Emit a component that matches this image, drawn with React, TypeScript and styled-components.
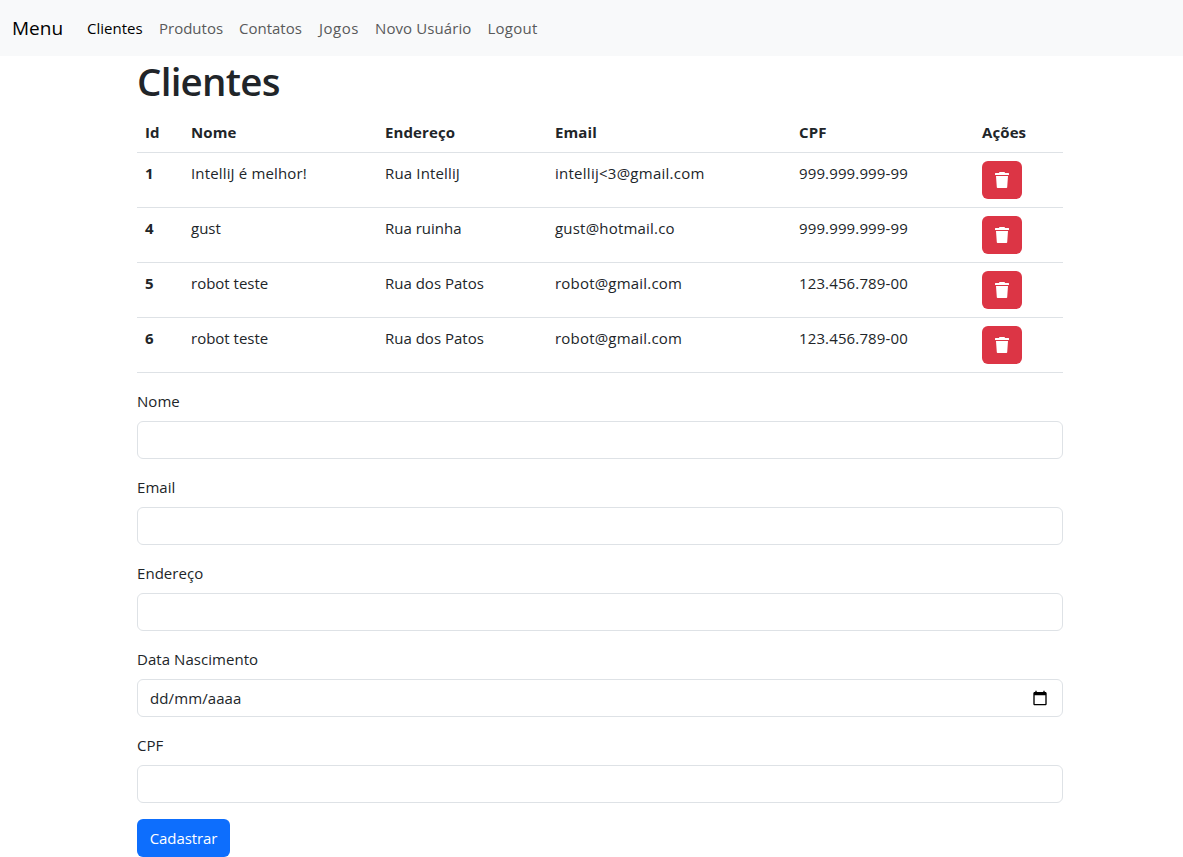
import React from "react";
import styled, { createGlobalStyle } from "styled-components";

const GlobalStyle = createGlobalStyle`
  *, *::before, *::after { box-sizing: border-box; }
  body {
    margin: 0;
    background: #fff;
    color: #212529;
    font-family: "Open Sans", "Noto Sans", sans-serif;
    font-size: 15px;
    line-height: 24px;
  }
`;

const Navbar = styled.nav`
  display: flex;
  align-items: center;
  height: 56px;
  padding: 0 12px;
  background: #f8f9fa;
`;

const Brand = styled.a`
  width: 51px;
  margin-right: 16px;
  color: #000;
  font-size: 19px;
  line-height: 30px;
  white-space: nowrap;
`;

const NavLink = styled.a<{ $active?: boolean; $width: number; $tracking?: number }>`
  flex: none;
  width: ${(p) => p.$width}px;
  padding: 8px;
  color: ${(p) => (p.$active ? "#000" : "#595a5b")};
  letter-spacing: ${(p) => p.$tracking ?? 0}px;
  white-space: nowrap;
`;

const Container = styled.main`
  width: 926px;
  margin-left: 137px;
`;

const Title = styled.h1`
  height: 48px;
  margin: 0 0 8px;
  padding-top: 1px;
  font-size: 38.5px;
  font-weight: 600;
  letter-spacing: -0.75px;
  line-height: 48px;
`;

const Table = styled.table`
  width: 100%;
  margin-bottom: 16px;
  border-collapse: collapse;
  table-layout: fixed;
  text-align: left;
  vertical-align: top;
`;

const HeaderCell = styled.th`
  padding: 8px;
  border-bottom: 1px solid #dee2e6;
  letter-spacing: 0.1px;
  vertical-align: top;
  white-space: nowrap;
`;

const Cell = styled.td<{ $tracking?: number }>`
  padding: 8px;
  border-bottom: 1px solid #dee2e6;
  letter-spacing: ${(p) => p.$tracking ?? 0}px;
  vertical-align: top;
  white-space: nowrap;
`;

const Column = styled.col<{ $width: number }>`
  width: ${(p) => p.$width}px;
`;

const DeleteButton = styled.button`
  display: flex;
  align-items: center;
  justify-content: center;
  width: 40px;
  height: 38px;
  padding: 0;
  border: 0;
  border-radius: 6px;
  background: #dc3545;
  color: #fff;
`;

const Field = styled.div`
  margin-bottom: 16px;
`;

const Label = styled.label`
  display: block;
  margin-bottom: 8px;
  letter-spacing: 0.05px;
`;

const Control = styled.div`
  display: flex;
  align-items: center;
  justify-content: space-between;
  height: 38px;
  padding: 0 12px;
  border: 1px solid #dee2e6;
  border-radius: 6px;
  letter-spacing: 0.1px;
`;

const Submit = styled.button`
  display: block;
  width: 93px;
  height: 38px;
  padding: 0;
  border: 0;
  border-radius: 6px;
  background: #0d6efd;
  color: #fff;
  font: inherit;
  letter-spacing: -0.1px;
`;

const TrashIcon = () => (
  <svg width="16" height="16" viewBox="0 0 16 16" fill="currentColor">
    <path d="M5.500 0h5l.6 1H14.500a.5.5 0 0 1 .5.5V3H1V1.500a.5.5 0 0 1 .5-.5H4.900zM2 4h12l-.8 11.200a.8.8 0 0 1-.8.8H3.600a.8.8 0 0 1-.8-.8z" />
  </svg>
);

const CalendarIcon = () => (
  <svg width="20" height="16" viewBox="0 0 24 24" fill="#000">
    <path d="M20 3h-1V1h-2v2H7V1H5v2H4c-1.100 0-2 .9-2 2v16c0 1.100.9 2 2 2h16c1.100 0 2-.9 2-2V5c0-1.100-.9-2-2-2zm0 18H4V8h16v13z" />
  </svg>
);

const links = [
  { label: "Clientes", width: 72 },
  { label: "Produtos", width: 80 },
  { label: "Contatos", width: 80 },
  { label: "Jogos", width: 56, tracking: 0.5 },
  { label: "Novo Usuário", width: 112.5, tracking: 0.1 },
  { label: "Logout", width: 66, tracking: 0.25 },
];

const columns = [
  { label: "Id", width: 46 },
  { label: "Nome", width: 194 },
  { label: "Endereço", width: 170 },
  { label: "Email", width: 244 },
  { label: "CPF", width: 183 },
  { label: "Ações", width: 89 },
];

interface Client {
  id: number;
  name: string;
  address: string;
  email: string;
  cpf: string;
}

const clients: Client[] = [
  { id: 1, name: "IntelliJ é melhor!", address: "Rua IntelliJ", email: "intellij<3@gmail.com", cpf: "999.999.999-99" },
  { id: 4, name: "gust", address: "Rua ruinha", email: "gust@hotmail.co", cpf: "999.999.999-99" },
  { id: 5, name: "robot teste", address: "Rua dos Patos", email: "robot@gmail.com", cpf: "123.456.789-00" },
  { id: 6, name: "robot teste", address: "Rua dos Patos", email: "robot@gmail.com", cpf: "123.456.789-00" },
];

const fields = ["Nome", "Email", "Endereço", "Data Nascimento", "CPF"];

export default function App() {
  return (
    <>
      <GlobalStyle />
      <Navbar>
        <Brand>Menu</Brand>
        {links.map((link, i) => (
          <NavLink key={link.label} $active={i === 0} $width={link.width} $tracking={link.tracking}>
            {link.label}
          </NavLink>
        ))}
      </Navbar>
      <Container>
        <Title>Clientes</Title>
        <Table>
          <colgroup>
            {columns.map((c) => (
              <Column key={c.label} $width={c.width} />
            ))}
          </colgroup>
          <thead>
            <tr>
              {columns.map((c) => (
                <HeaderCell key={c.label}>{c.label}</HeaderCell>
              ))}
            </tr>
          </thead>
          <tbody>
            {clients.map((client) => (
              <tr key={client.id}>
                <HeaderCell>{client.id}</HeaderCell>
                <Cell $tracking={client.id === 1 ? 0.15 : 0}>{client.name}</Cell>
                <Cell $tracking={client.id === 1 ? 0.15 : 0}>{client.address}</Cell>
                <Cell $tracking={client.id === 1 ? 0.26 : 0.2}>{client.email}</Cell>
                <Cell $tracking={0.13}>{client.cpf}</Cell>
                <Cell>
                  <DeleteButton aria-label="Excluir">
                    <TrashIcon />
                  </DeleteButton>
                </Cell>
              </tr>
            ))}
          </tbody>
        </Table>
        {fields.map((field) => (
          <Field key={field}>
            <Label>{field}</Label>
            <Control>
              {field === "Data Nascimento" && (
                <>
                  <span>dd/mm/aaaa</span>
                  <CalendarIcon />
                </>
              )}
            </Control>
          </Field>
        ))}
        <Submit>Cadastrar</Submit>
      </Container>
    </>
  );
}
